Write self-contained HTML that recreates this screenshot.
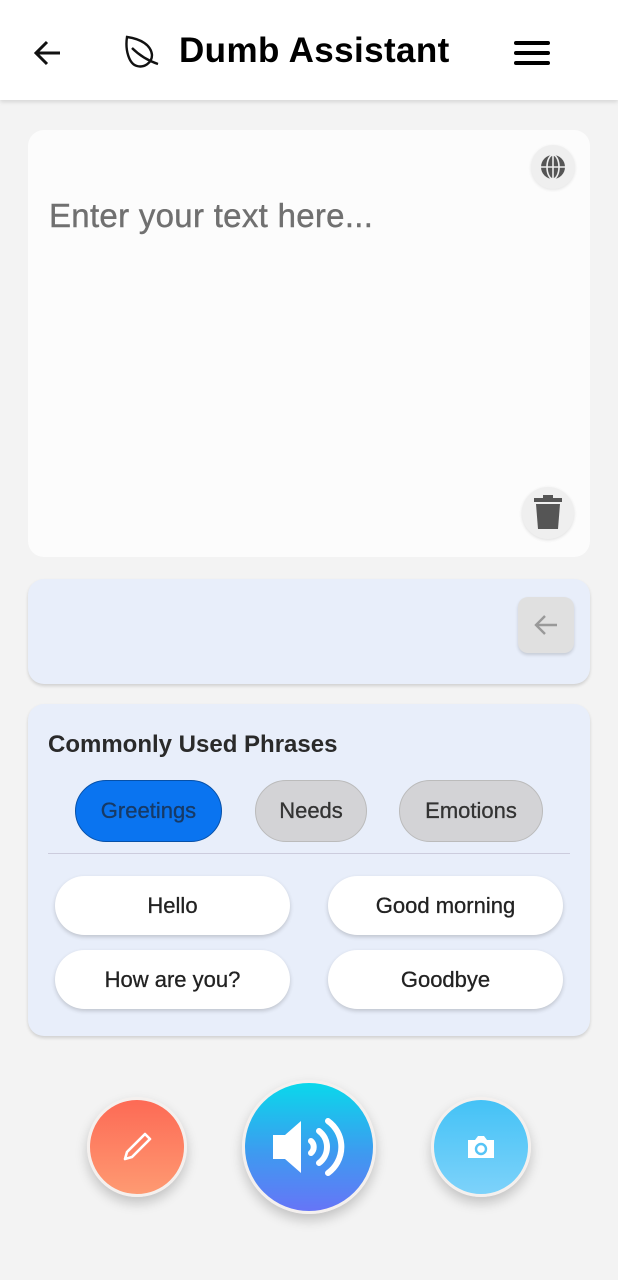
<!DOCTYPE html>
<html><head><style>
*{box-sizing:border-box;margin:0;padding:0}
body{width:618px;height:1280px;background:#f3f3f3;font-family:"Liberation Sans",Roboto,sans-serif;position:relative;overflow:hidden}
.abs{position:absolute}
.hdr{left:0;top:0;width:618px;height:100px;background:#fff;box-shadow:0 2px 4px rgba(0,0,0,.12)}
.card{border-radius:16px}
.pill{position:absolute;border-radius:32px;display:flex;align-items:center;justify-content:center;font-size:22px;color:#222;-webkit-text-stroke:0.3px currentColor}
.ph{background:#fff;box-shadow:0 2px 4px rgba(0,0,0,.18)}
.tab{background:#d3d3d6;border:1px solid #bbb;color:#333}
.circ{position:absolute;border-radius:50%;display:flex;align-items:center;justify-content:center;border:3px solid #f4f0ee;box-shadow:0 6px 12px rgba(0,0,0,.2)}
</style></head><body>
<div class="abs hdr">
 <svg class="abs" style="left:30px;top:36px" width="36" height="34" viewBox="0 0 36 34"><path d="M30 17H6M17 6L6 17l11 11" fill="none" stroke="#111" stroke-width="3"/></svg>
 <svg class="abs" style="left:122px;top:34px" width="42" height="38" viewBox="0 0 42 38"><path d="M5 3c14 2 24 8 25 18 0 8-8 13-15 11C7 30 3 16 5 3z" fill="none" stroke="#111" stroke-width="2.4"/><path d="M10 14c6 6 14 12 26 16" fill="none" stroke="#111" stroke-width="2.4"/></svg>
 <div class="abs" style="left:179px;top:31px;font-size:35px;font-weight:bold;color:#000;letter-spacing:0.4px">Dumb Assistant</div>
 <div class="abs" style="left:514px;top:41px;width:36px;height:4px;background:#000;border-radius:2px"></div>
 <div class="abs" style="left:514px;top:51px;width:36px;height:4px;background:#000;border-radius:2px"></div>
 <div class="abs" style="left:514px;top:61px;width:36px;height:4px;background:#000;border-radius:2px"></div>
</div>
<div class="abs card" style="left:28px;top:130px;width:562px;height:427px;background:#fcfcfc"></div>
<div class="abs" style="left:49px;top:197px;font-size:33px;color:#707070;letter-spacing:0.3px;-webkit-text-stroke:0.4px #707070">Enter your text here...</div>
<div class="abs" style="left:531px;top:145px;width:44px;height:44px;border-radius:50%;background:#efefef;box-shadow:0 1px 3px rgba(0,0,0,.1)"></div>
<svg class="abs" style="left:540px;top:154px" width="26" height="26" viewBox="0 0 26 26"><circle cx="13" cy="13" r="12" fill="#555"/><g stroke="#efefef" stroke-width="1.6" fill="none"><path d="M1 13h24M13 1v24"/><ellipse cx="13" cy="13" rx="6" ry="12"/></g></svg>
<div class="abs" style="left:522px;top:487px;width:52px;height:52px;border-radius:50%;background:#efefef;box-shadow:0 1px 3px rgba(0,0,0,.12)"></div>
<svg class="abs" style="left:532px;top:495px" width="32" height="36" viewBox="0 0 32 36"><rect x="2" y="3" width="28" height="4" fill="#555"/><rect x="11" y="0" width="10" height="4" fill="#555"/><path d="M4 9h24l-2 25H6z" fill="#555"/></svg>
<div class="abs card" style="left:28px;top:579px;width:562px;height:105px;background:#e8eefa;box-shadow:0 2px 3px rgba(0,0,0,.15)"></div>
<div class="abs" style="left:518px;top:597px;width:56px;height:56px;border-radius:10px;background:#e0e0e0;box-shadow:0 2px 3px rgba(0,0,0,.15)"></div>
<svg class="abs" style="left:532px;top:612px" width="28" height="26" viewBox="0 0 28 26"><path d="M25 13H4M13 4l-9 9 9 9" fill="none" stroke="#999" stroke-width="2.4"/></svg>
<div class="abs card" style="left:28px;top:704px;width:562px;height:332px;background:#e8eefa;box-shadow:0 2px 3px rgba(0,0,0,.15)"></div>
<div class="abs" style="left:48px;top:731px;font-size:24px;font-weight:bold;color:#2a2a2a">Commonly Used Phrases</div>
<div class="pill" style="left:75px;top:780px;width:147px;height:62px;background:#0a74f0;border:1px solid #0650a8;color:#173a66">Greetings</div>
<div class="pill tab" style="left:255px;top:780px;width:112px;height:62px">Needs</div>
<div class="pill tab" style="left:399px;top:780px;width:144px;height:62px">Emotions</div>
<div class="abs" style="left:48px;top:853px;width:522px;height:1px;background:#ccd"></div>
<div class="pill ph" style="left:55px;top:876px;width:235px;height:59px">Hello</div>
<div class="pill ph" style="left:328px;top:876px;width:235px;height:59px">Good morning</div>
<div class="pill ph" style="left:55px;top:950px;width:235px;height:59px">How are you?</div>
<div class="pill ph" style="left:328px;top:950px;width:235px;height:59px">Goodbye</div>
<div class="circ" style="left:87px;top:1097px;width:100px;height:100px;background:linear-gradient(#fd6a55,#fe9a72)">
 <svg width="36" height="36" viewBox="0 0 36 36"><path d="M26 5l5 5L13 28l-7 2 2-7z" fill="none" stroke="#fff" stroke-width="2.6" stroke-linejoin="round"/></svg></div>
<div class="circ" style="left:242px;top:1080px;width:134px;height:134px;background:linear-gradient(#0ad8eb,#3e9af0 55%,#6675f7)">
 <svg width="76" height="64" viewBox="0 0 76 64"><path d="M2 20h12L30 6v52L14 44H2z" fill="#fff"/><g fill="none" stroke="#fff" stroke-width="6" stroke-linecap="round"><path d="M40 26a8 8 0 0 1 0 12"/><path d="M48 16a20 20 0 0 1 0 32"/><path d="M57 6a32 32 0 0 1 0 52"/></g></svg></div>
<div class="circ" style="left:431px;top:1097px;width:100px;height:100px;background:linear-gradient(#44c2f6,#7dd2fa)">
 <svg width="30" height="26" viewBox="0 0 30 26"><path d="M2 6h7l3-4h6l3 4h7v18H2z" fill="#fff"/><circle cx="15" cy="15" r="5" fill="none" stroke="#56c4f6" stroke-width="2.4"/></svg></div>
</body></html>
